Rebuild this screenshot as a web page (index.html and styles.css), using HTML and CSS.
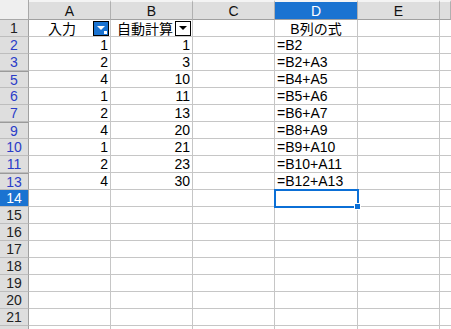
FILE: index.html
```html
<!DOCTYPE html>
<html>
<head>
<meta charset="utf-8">
<link rel="stylesheet" href="styles.css">
</head>
<body>
<div class="sheet">
  <div class="corner"></div>
  <div class="ch">A</div><div class="ch">B</div><div class="ch">C</div><div class="ch ch-sel">D</div><div class="ch">E</div><div class="ch ch-last"></div>

  <div class="rh">1</div>
  <div class="c center hdrcell"><span class="hdtxt">入力</span><span class="fbtn fbtn-on"><svg width="16" height="15" viewBox="0 0 16 15"><path d="M4 5h8l-4 4z" fill="#fff"/><rect x="11" y="10" width="3" height="3" fill="#fff"/></svg></span></div>
  <div class="c hdrcell"><span class="hdtxt2">自動計算</span><span class="fbtn"><svg width="16" height="15" viewBox="0 0 16 15"><path d="M4 5h8l-4 4z" fill="#000"/></svg></span></div>
  <div class="c"></div>
  <div class="c center">B列の式</div>
  <div class="c"></div><div class="c last"></div>

  <div class="rh blue">2</div><div class="c num">1</div><div class="c num">1</div><div class="c"></div><div class="c">=B2</div><div class="c"></div><div class="c last"></div>
  <div class="rh blue">3</div><div class="c num">2</div><div class="c num">3</div><div class="c"></div><div class="c">=B2+A3</div><div class="c"></div><div class="c last"></div>
  <div class="rh blue hid">5</div><div class="c num">4</div><div class="c num">10</div><div class="c"></div><div class="c">=B4+A5</div><div class="c"></div><div class="c last"></div>
  <div class="rh blue">6</div><div class="c num">1</div><div class="c num">11</div><div class="c"></div><div class="c">=B5+A6</div><div class="c"></div><div class="c last"></div>
  <div class="rh blue">7</div><div class="c num">2</div><div class="c num">13</div><div class="c"></div><div class="c">=B6+A7</div><div class="c"></div><div class="c last"></div>
  <div class="rh blue hid">9</div><div class="c num">4</div><div class="c num">20</div><div class="c"></div><div class="c">=B8+A9</div><div class="c"></div><div class="c last"></div>
  <div class="rh blue">10</div><div class="c num">1</div><div class="c num">21</div><div class="c"></div><div class="c">=B9+A10</div><div class="c"></div><div class="c last"></div>
  <div class="rh blue">11</div><div class="c num">2</div><div class="c num">23</div><div class="c"></div><div class="c">=B10+A11</div><div class="c"></div><div class="c last"></div>
  <div class="rh blue hid">13</div><div class="c num">4</div><div class="c num">30</div><div class="c"></div><div class="c">=B12+A13</div><div class="c"></div><div class="c last"></div>
  <div class="rh rh-sel">14</div><div class="c"></div><div class="c"></div><div class="c"></div><div class="c active"><span class="handle"></span></div><div class="c"></div><div class="c last"></div>
  <div class="rh">15</div><div class="c"></div><div class="c"></div><div class="c"></div><div class="c"></div><div class="c"></div><div class="c last"></div>
  <div class="rh">16</div><div class="c"></div><div class="c"></div><div class="c"></div><div class="c"></div><div class="c"></div><div class="c last"></div>
  <div class="rh">17</div><div class="c"></div><div class="c"></div><div class="c"></div><div class="c"></div><div class="c"></div><div class="c last"></div>
  <div class="rh">18</div><div class="c"></div><div class="c"></div><div class="c"></div><div class="c"></div><div class="c"></div><div class="c last"></div>
  <div class="rh">19</div><div class="c"></div><div class="c"></div><div class="c"></div><div class="c"></div><div class="c"></div><div class="c last"></div>
  <div class="rh">20</div><div class="c"></div><div class="c"></div><div class="c"></div><div class="c"></div><div class="c"></div><div class="c last"></div>
  <div class="rh">21</div><div class="c"></div><div class="c"></div><div class="c"></div><div class="c"></div><div class="c"></div><div class="c last"></div>
  <div class="rh"></div><div class="c"></div><div class="c"></div><div class="c"></div><div class="c"></div><div class="c"></div><div class="c last"></div>
</div>
</body>
</html>
```

FILE: styles.css
```css
html, body {
  margin: 0;
  padding: 0;
  background: #fff;
  overflow: hidden;
}
.sheet {
  display: grid;
  grid-template-columns: 29px 82px 82px 82px 83px 82px minmax(0, 1fr);
  grid-auto-rows: 17px;
  grid-template-rows: 20px;
  font-family: "Liberation Sans", Arial, "Noto Sans CJK JP", sans-serif;
  font-size: 14px;
  color: #000;
  width: 451px;
  height: 329px;
  overflow: hidden;
}
.corner {
  background: #efefef;
  border-right: 1px solid #a8a8a8;
  border-bottom: 1px solid #a8a8a8;
  box-sizing: border-box;
}
.ch {
  background: #dedede;
  border-top: 2px solid #f4f4f4;
  border-right: 1px solid #b0b0b0;
  border-bottom: 1px solid #a0a0a0;
  box-sizing: border-box;
  display: flex;
  align-items: center;
  justify-content: center;
  color: #111;
}
.ch-sel {
  background: #1a73d1;
  color: #fff;
}
.rh {
  background: #dedede;
  border-right: 1px solid #a0a0a0;
  border-bottom: 1px solid #bdbdbd;
  box-sizing: border-box;
  display: flex;
  align-items: center;
  justify-content: center;
  color: #222;
}
.rh.blue { color: #2a3cc8; }
.rh.hid { border-top: 1px solid #9a9a9a; }
.rh-sel {
  background: #1a73d1;
  color: #fff;
}
.c {
  border-right: 1px solid #c6c6c6;
  border-bottom: 1px solid #c6c6c6;
  box-sizing: border-box;
  display: flex;
  align-items: center;
  padding: 0 2px;
  white-space: nowrap;
  position: relative;
}
.c.last { border-right: none; }
.num { justify-content: flex-end; }
.center { justify-content: center; }
.hdrcell { padding-right: 1px; }
.hdtxt { flex: 1; text-align: center; }
.hdtxt2 { flex: 1; padding-left: 4px; }
.fbtn {
  width: 16px;
  height: 15px;
  box-sizing: border-box;
  border: 1px solid #000;
  background: #fff;
  display: flex;
}
.fbtn svg { display: block; margin: -1px; }
.fbtn-on { background: #1a73d1; }
.active {
  outline: 2px solid #0b6fd6;
  outline-offset: -1px;
  z-index: 2;
}
.handle {
  position: absolute;
  right: -4px;
  bottom: -4px;
  width: 5px;
  height: 5px;
  background: #0b6fd6;
  border: 1px solid #fff;
}
```
